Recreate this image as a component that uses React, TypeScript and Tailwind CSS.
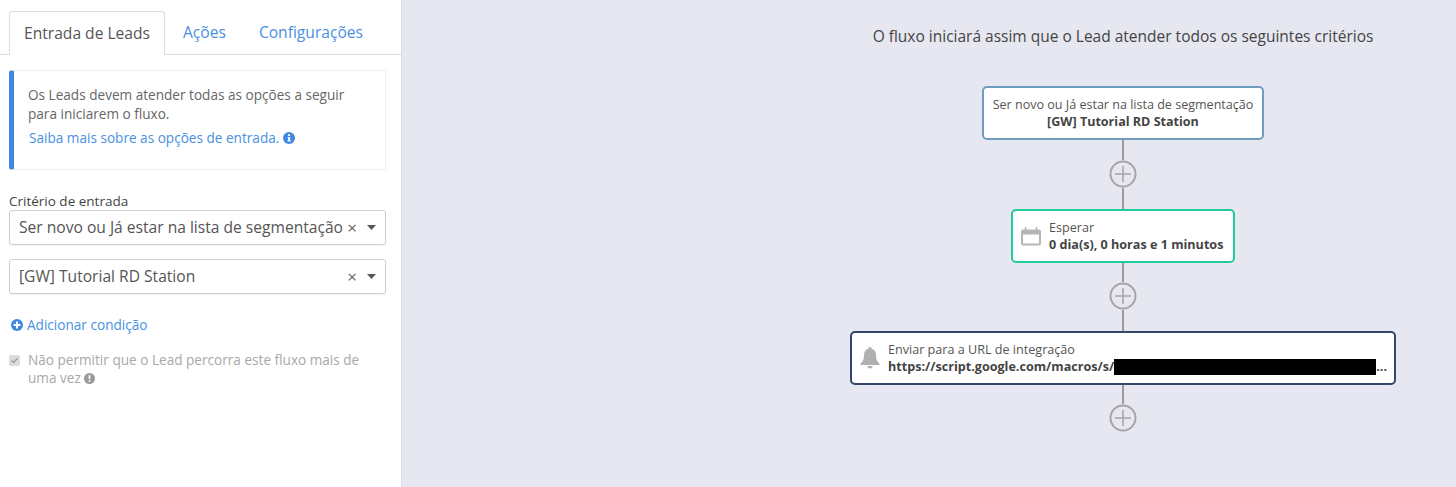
import React from "react";

const openSans = "font-['Open_Sans',sans-serif]";

function AddButton() {
  return (
    <svg width="28" height="28" viewBox="0 0 28 28" className="shrink-0" aria-hidden>
      <circle cx="14" cy="14" r="12.5" fill="none" stroke="#a4a4a6" strokeWidth="2" />
      <path d="M14 6v16M6 14h16" stroke="#a4a4a6" strokeWidth="1.5" />
    </svg>
  );
}

function Line({ className }: { className: string }) {
  return <div className={`w-[2px] bg-[#9c9c9f] ${className}`} />;
}

function SelectBox({ label, className }: { label: string; className?: string }) {
  return (
    <div
      className={`flex h-[35px] items-center rounded-[3px] border border-[#cfcfcf] bg-white pl-[9px] pr-[9px] shadow-[0_1px_1px_rgba(0,0,0,0.06)] ${className ?? ""}`}
    >
      <span className="flex-1 truncate text-[15.6px] text-[#555]">{label}</span>
      <span className="ml-[2px] text-[17px] leading-none text-[#666]">×</span>
      <svg width="9" height="5" viewBox="0 0 9 5" className="ml-[10px]" aria-hidden>
        <path d="M0 0h9L4.500 5z" fill="#555" />
      </svg>
    </div>
  );
}

export default function App() {
  return (
    <div className={`flex h-[487px] w-[1456px] overflow-hidden bg-[#e6e7f1] ${openSans}`}>
      <aside className="h-full w-[402px] shrink-0 border-r border-[#dcdde4] bg-white">
        <div className="flex h-[55px] items-end border-b border-[#ddd] pl-[9px]">
          <div className="-mb-px flex h-[44px] w-[156px] items-center justify-center rounded-t-[3px] border border-b-0 border-[#ddd] bg-white text-[15.6px] text-[#555]">
            Entrada de Leads
          </div>
          <div className="flex h-[44px] items-center pl-[18px] pt-[2px] text-[15.6px] text-[#4a90e2]">Ações</div>
          <div className="flex h-[44px] items-center pl-[33px] pt-[2px] text-[15.6px] text-[#4a90e2]">Configurações</div>
        </div>

        <div className="ml-[9px] mt-[15px] h-[100px] w-[377px] rounded-[3px] border border-l-[5px] border-[#eeeeee] border-l-[#3f87e0] bg-white pl-[14px] pr-4 pt-[14px]">
          <p className="text-[13.6px] leading-[19px] text-[#666]">
            Os Leads devem atender todas as opções a seguir para iniciarem o fluxo.
          </p>
          <p className="ml-px mt-[5px] flex items-center text-[13.6px] leading-[19px] text-[#4a90e2]">
            Saiba mais sobre as opções de entrada.
            <svg width="12" height="12" viewBox="0 0 12 12" className="ml-[4px]" aria-hidden>
              <circle cx="6" cy="6" r="6" fill="#3f87e0" />
              <path d="M5 2.300h2v1.600H5zM4.600 5h2.500v3.600h.7v1H4.400v-1h.8V6h-.6z" fill="#fff" />
            </svg>
          </p>
        </div>

        <div className="ml-[9px] mt-[22px] w-[377px]">
          <div className="text-[13.5px] leading-[18px] text-[#444]">Critério de entrada</div>
          <SelectBox label="Ser novo ou Já estar na lista de segmentação" />
          <SelectBox label="[GW] Tutorial RD Station" className="mt-[14px]" />
          <div className="ml-[2px] mt-[21px] flex items-center text-[13.6px] leading-[19px] text-[#4a90e2]">
            <svg width="12" height="12" viewBox="0 0 12 12" className="mr-[4px]" aria-hidden>
              <circle cx="6" cy="6" r="6" fill="#3f87e0" />
              <path d="M5 2.600h2V5h2.400v2H7v2.400H5V7H2.600V5H5z" fill="#fff" />
            </svg>
            Adicionar condição
          </div>
          <div className="mt-[17px] flex items-start">
            <span className="mt-[4px] flex h-[11px] w-[11px] shrink-0 items-center justify-center rounded-[2px] bg-[#dcdcdc]">
              <svg width="9" height="9" viewBox="0 0 9 9" aria-hidden>
                <path d="M1.500 4.600l2 2 4-4.400" fill="none" stroke="#9a9a9a" strokeWidth="1.400" />
              </svg>
            </span>
            <p className="ml-[8px] w-[340px] text-[13.6px] leading-[18px] text-[#a8a8a8]">
              Não permitir que o Lead percorra este fluxo mais de uma vez
              <svg width="11" height="11" viewBox="0 0 12 12" className="ml-[3px] inline-block align-[-0.5px]" aria-hidden>
                <circle cx="6" cy="6" r="6" fill="#9a9a9a" />
                <path d="M5 2.400h2l-.2 4.400H5.200zM5 7.800h2v1.800H5z" fill="#fff" />
              </svg>
            </p>
          </div>
        </div>
      </aside>

      <main className="ml-[448px] flex w-[546px] flex-col items-center">
        <h1 className="mb-[40px] mt-[26px] text-[15.5px] font-normal leading-5 text-[#444]">
          O fluxo iniciará assim que o Lead atender todos os seguintes critérios
        </h1>

        <div className="flex h-[54px] w-[282px] flex-col items-center justify-center rounded-[5px] border-2 border-[#6f9dc0] bg-white text-[12.55px] leading-[17px] text-[#555]">
          <span>Ser novo ou Já estar na lista de segmentação</span>
          <b className="font-bold text-[#444]">[GW] Tutorial RD Station</b>
        </div>
        <Line className="h-[20px]" />
        <AddButton />
        <Line className="h-[21px]" />

        <div className="flex h-[54px] w-[224px] items-center rounded-[5px] border-2 border-[#1fcb9b] bg-white pl-[7px] text-[12.6px] leading-[17px] text-[#555]">
          <svg width="22" height="20" viewBox="0 0 22 20" className="mr-[7px] shrink-0" aria-hidden>
            <path
              d="M1 5.500a2 2 0 0 1 2-2h16a2 2 0 0 1 2 2v12a2 2 0 0 1-2 2H3a2 2 0 0 1-2-2zM3 8.500v9h16v-9z"
              fill="#b5b5b5"
              fillRule="evenodd"
            />
            <path d="M5.500 1v4M16.500 1v4" stroke="#b5b5b5" strokeWidth="1.500" />
          </svg>
          <div>
            <div>Esperar</div>
            <b className="font-bold text-[#444]">0 dia(s), 0 horas e 1 minutos</b>
          </div>
        </div>
        <Line className="h-[19px]" />
        <AddButton />
        <Line className="h-[21px]" />

        <div className="flex h-[54px] w-[546px] items-center rounded-[5px] border-2 border-[#34466a] bg-white pl-[8px] text-[12.6px] leading-[17px] text-[#555]">
          <svg width="20" height="22" viewBox="0 0 20 22" className="mr-[8px] shrink-0" aria-hidden>
            <path
              d="M10 0a1.500 1.500 0 0 1 1.500 1.700C14.500 2.400 16 4.800 16 8c0 4.500 1.200 6.500 3.500 8.500v1.500H.5v-1.500C2.800 14.500 4 12.500 4 8c0-3.200 1.500-5.600 4.500-6.300A1.500 1.500 0 0 1 10 0zM7.500 19h5a2.500 2.500 0 0 1-5 0z"
              fill="#b0b0b0"
            />
          </svg>
          <div>
            <div>Enviar para a URL de integração</div>
            <div className="flex items-center font-bold text-[#444]">
              <span>https://script.google.com/macros/s/</span>
              <span className="h-[16px] w-[262px] self-end bg-black" />
              <span>...</span>
            </div>
          </div>
        </div>
        <Line className="h-[19px]" />
        <AddButton />
      </main>
    </div>
  );
}
